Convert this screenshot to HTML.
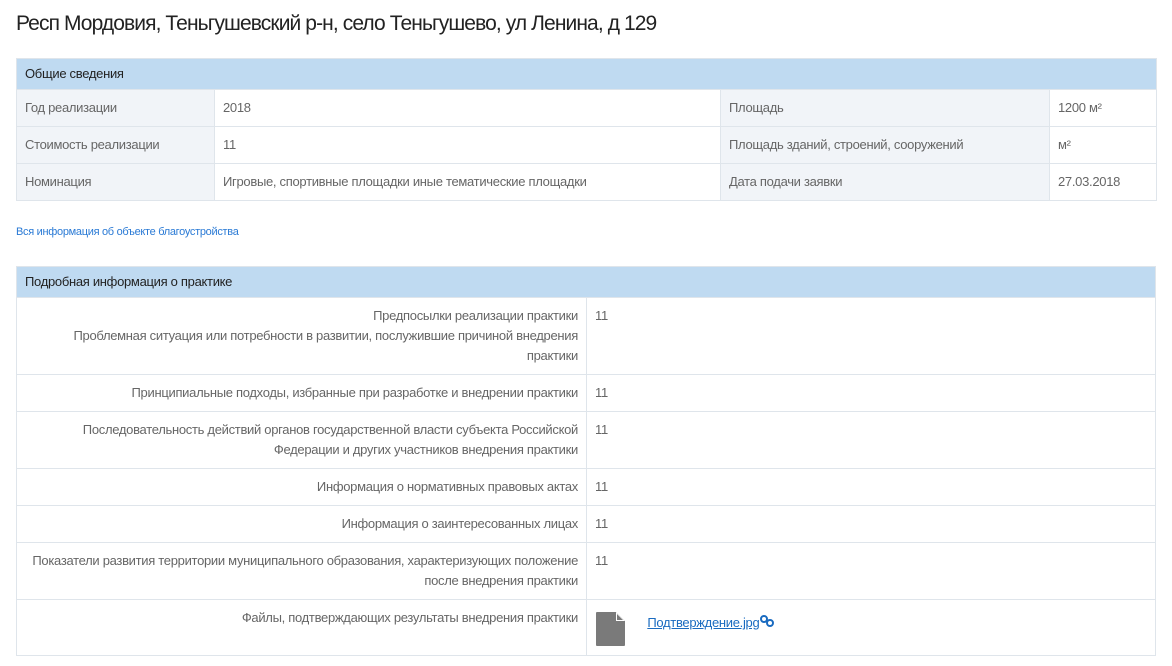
<!DOCTYPE html>
<html><head><meta charset="utf-8"><style>
body{margin:0;background:#fff;font-family:"Liberation Sans",sans-serif;color:#666;font-size:13px;letter-spacing:-0.3px}
h1{position:absolute;left:16px;top:12px;margin:0;font-size:21px;font-weight:normal;color:#222;letter-spacing:-0.9px}
table{position:absolute;left:16px;width:1140px;border-collapse:collapse;table-layout:fixed}
td{border:1px solid #dfe5eb;padding:0 8px;vertical-align:middle;line-height:20px}
.h td{background:#bfdaf1;color:#222;height:30px}
.l{background:#f1f4f8}
#t1 tr:not(.h) td{height:36px}
#t2 td.lab{text-align:right;vertical-align:top;padding-top:8px;padding-bottom:8px}
#t2 td.v{vertical-align:top;padding-top:8px}
a{color:#1a6bc0;text-decoration:underline}
.lk{position:absolute;left:16px;top:226px;font-size:11px;color:#2a7ad5;text-decoration:none;letter-spacing:-0.3px}
</style></head><body>
<h1>Респ Мордовия, Теньгушевский р-н, село Теньгушево, ул Ленина, д 129</h1>
<table id="t1" style="top:58px">
<colgroup><col style="width:198px"><col style="width:506px"><col style="width:329px"><col style="width:107px"></colgroup>
<tr class="h"><td colspan="4">Общие сведения</td></tr>
<tr><td class="l">Год реализации</td><td>2018</td><td class="l">Площадь</td><td>1200 м²</td></tr>
<tr><td class="l">Стоимость реализации</td><td>11</td><td class="l">Площадь зданий, строений, сооружений</td><td>м²</td></tr>
<tr><td class="l">Номинация</td><td>Игровые, спортивные площадки иные тематические площадки</td><td class="l">Дата подачи заявки</td><td>27.03.2018</td></tr>
</table>
<a class="lk">Вся информация об объекте благоустройства</a>
<table id="t2" style="top:266px">
<colgroup><col style="width:570px"><col></colgroup>
<tr class="h"><td colspan="2">Подробная информация о практике</td></tr>
<tr style="height:77px"><td class="lab">Предпосылки реализации практики<br>Проблемная ситуация или потребности в развитии, послужившие причиной внедрения<br>практики</td><td class="v">11</td></tr>
<tr style="height:37px"><td class="lab">Принципиальные подходы, избранные при разработке и внедрении практики</td><td class="v">11</td></tr>
<tr style="height:57px"><td class="lab">Последовательность действий органов государственной власти субъекта Российской<br>Федерации и других участников внедрения практики</td><td class="v">11</td></tr>
<tr style="height:37px"><td class="lab">Информация о нормативных правовых актах</td><td class="v">11</td></tr>
<tr style="height:37px"><td class="lab">Информация о заинтересованных лицах</td><td class="v">11</td></tr>
<tr style="height:57px"><td class="lab">Показатели развития территории муниципального образования, характеризующих положение<br>после внедрения практики</td><td class="v">11</td></tr>
<tr style="height:56px"><td class="lab">Файлы, подтверждающих результаты внедрения практики</td><td class="v" style="padding-top:12px">
<svg width="30" height="34" viewBox="0 0 30 34" style="vertical-align:top;margin-left:1px"><path d="M0 1Q0 0 1 0H20L29 9V33Q29 34 28 34H1Q0 34 0 33Z" fill="#7a7a7a"/><path d="M20 0V9H29Z" fill="#fff"/><path d="M21 2L27 8H21Z" fill="#7a7a7a"/></svg>
<a style="margin-left:18px;position:relative;top:1px">Подтверждение.jpg</a><svg width="14" height="12" viewBox="0 0 14 12" style="position:relative;top:1px;margin-left:1px"><circle cx="4" cy="4" r="3" fill="none" stroke="#1a6bc0" stroke-width="2"/><circle cx="10" cy="8" r="3" fill="none" stroke="#1a6bc0" stroke-width="2"/></svg>
</td></tr>
</table>
</body></html>
